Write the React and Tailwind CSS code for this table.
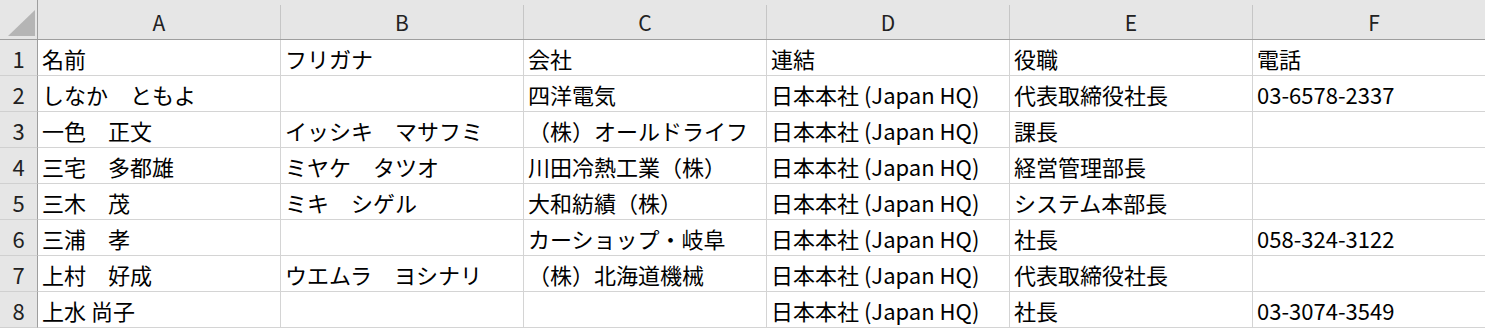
import React from "react";

const cols = ["A", "B", "C", "D", "E", "F"];
const rows = [
  ["名前", "フリガナ", "会社", "連結", "役職", "電話"],
  ["しなか　ともよ", "", "四洋電気", "日本本社 (Japan HQ)", "代表取締役社長", "03-6578-2337"],
  ["一色　正文", "イッシキ　マサフミ", "（株）オールドライフ", "日本本社 (Japan HQ)", "課長", ""],
  ["三宅　多都雄", "ミヤケ　タツオ", "川田冷熱工業（株）", "日本本社 (Japan HQ)", "経営管理部長", ""],
  ["三木　茂", "ミキ　シゲル", "大和紡績（株）", "日本本社 (Japan HQ)", "システム本部長", ""],
  ["三浦　孝", "", "カーショップ・岐阜", "日本本社 (Japan HQ)", "社長", "058-324-3122"],
  ["上村　好成", "ウエムラ　ヨシナリ", "（株）北海道機械", "日本本社 (Japan HQ)", "代表取締役社長", ""],
  ["上水 尚子", "", "", "日本本社 (Japan HQ)", "社長", "03-3074-3549"],
];

const font = { fontFamily: '"Noto Sans CJK JP", "Noto Sans", sans-serif' };

export default function App() {
  return (
    <div
      className="w-[1485px] h-[331px] overflow-hidden bg-white text-black text-[22px] leading-none"
      style={font}
    >
      <div className="grid grid-cols-[38px_repeat(6,243px)] w-[1496px]">
        {/* corner */}
        <div className="h-[40px] bg-[#e6e6e6] border-r border-b border-[#9e9e9e] relative">
          <svg width="38" height="40" className="absolute left-0 top-0">
            <polygon points="35,10 35,36 8,36" fill="#b5b5b5" />
          </svg>
        </div>
        {cols.map((c) => (
          <div
            key={c}
            className="h-[40px] bg-[#e6e6e6] border-b border-[#9e9e9e] pt-[5px] flex flex-col"
          >
            <div className="flex-1 border-r border-[#c6c6c6] flex items-center justify-center text-[#222] text-[21px]">
              {c}
            </div>
          </div>
        ))}
        {rows.map((r, i) => (
          <React.Fragment key={i}>
            <div className="h-[36px] bg-[#e6e6e6] border-r border-[#9e9e9e] border-b border-b-[#d0d0d0] flex items-center justify-center text-[#222] text-[22px]">
              {i + 1}
            </div>
            {r.map((v, j) => (
              <div
                key={j}
                className="h-[36px] border-r border-b border-[#d4d4d4] flex items-center pl-[4px] whitespace-nowrap"
              >
                {v}
              </div>
            ))}
          </React.Fragment>
        ))}
      </div>
    </div>
  );
}
